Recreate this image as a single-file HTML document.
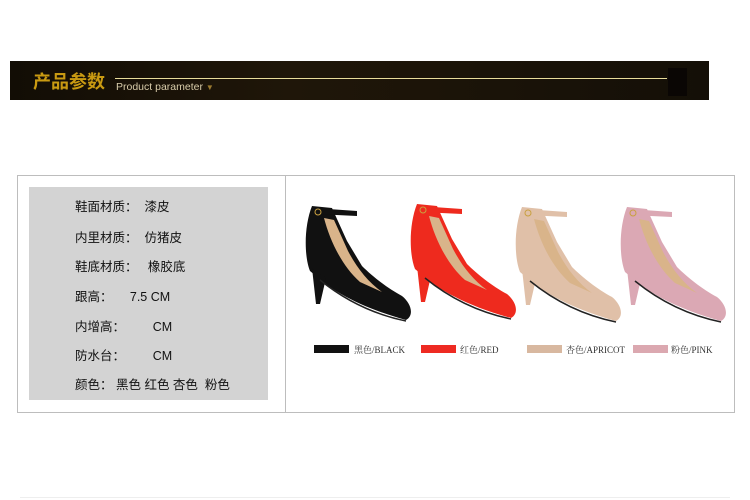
<!DOCTYPE html>
<html><head><meta charset="utf-8"><style>
body{margin:0;width:750px;height:500px;background:#fff;position:relative;overflow:hidden;font-family:"Liberation Sans","Noto Sans CJK SC",sans-serif}
.bar{position:absolute;left:10px;top:61px;width:699px;height:39px;background:linear-gradient(90deg,#120d05,#1f1609 40%,#1a1308 70%,#140f07)}
.t{position:absolute;left:33px;top:68px;color:#c99a12;font-size:18px;font-weight:bold}
.ln{position:absolute;left:115px;top:78px;width:552px;height:1px;background:#e8dc9a}
.pp{position:absolute;left:116px;top:81px;color:#d8ccaa;font-size:10.5px}
.sq{position:absolute;left:668px;top:68px;width:19px;height:28px;background:#0a0604}
.box{position:absolute;left:17px;top:175px;width:716px;height:236px;border:1px solid #bdbdbd}
.div{position:absolute;left:285px;top:175px;width:1px;height:238px;background:#bdbdbd}
.panel{position:absolute;left:29px;top:187px;width:239px;height:213px;background:#d3d3d3}
.r{position:absolute;left:75px;font-size:12.5px;color:#111;white-space:pre}
.sw{position:absolute;top:345px;width:35px;height:8px}
.lb{position:absolute;top:343px;font-size:9px;color:#333;font-family:"Liberation Serif","Noto Serif CJK SC",serif}
.bl{position:absolute;left:20px;top:497px;width:710px;height:1px;background:#eee}
</style></head><body>
<div class="bar"></div><div class="t">产品参数</div><div class="ln"></div>
<div class="pp">Product parameter <span style="color:#9a7a30;font-size:8px">▼</span></div><div class="sq"></div>
<div class="box"></div><div class="div"></div><div class="panel"></div>
<div class="r" style="top:196px">鞋面材质：  漆皮</div>
<div class="r" style="top:227px">内里材质：  仿猪皮</div>
<div class="r" style="top:256px">鞋底材质：   橡胶底</div>
<div class="r" style="top:286px">跟高：     7.5 CM</div>
<div class="r" style="top:316px">内增高：        CM</div>
<div class="r" style="top:345px">防水台：        CM</div>
<div class="r" style="top:374px">颜色： 黑色 红色 杏色  粉色</div>
<svg width="750" height="500" style="position:absolute;left:0;top:0">
<defs><g id="s">
<path d="M10,10 C2,30 2,60 8,75 L14,80 C30,95 60,112 104,124 C112,120 110,108 100,100 C85,92 70,80 60,70 L45,45 L30,12 Z" fill="var(--c)"/>
<path d="M22,22 C28,45 40,70 58,86 L80,96 C66,86 55,72 46,55 L32,24 Z" fill="#d9b48a"/>
<path d="M10,72 L14,108 L18,108 L24,82 Z" fill="var(--c)"/>
<path d="M12,12 L55,15 L55,20 L14,18 Z" fill="var(--c)"/>
<circle cx="16" cy="16" r="3" fill="none" stroke="#c9a040" stroke-width="1"/>
<path d="M18,84 C45,106 75,119 104,125" stroke="#222" stroke-width="1.5" fill="none"/>
</g></defs>
<use href="#s" x="302" y="196" style="--c:#111"/>
<use href="#s" x="407" y="194" style="--c:#ee2a1e"/>
<use href="#s" x="512" y="197" style="--c:#e0c0a8"/>
<use href="#s" x="617" y="197" style="--c:#dba8b4"/>
</svg>
<div class="sw" style="left:314px;background:#111"></div><div class="lb" style="left:354px">黑色/BLACK</div>
<div class="sw" style="left:421px;background:#ee2a22"></div><div class="lb" style="left:460px">红色/RED</div>
<div class="sw" style="left:527px;background:#d8b8a0"></div><div class="lb" style="left:566px">杏色/APRICOT</div>
<div class="sw" style="left:633px;background:#dba8b0"></div><div class="lb" style="left:671px">粉色/PINK</div>
<div class="bl"></div>
</body></html>
